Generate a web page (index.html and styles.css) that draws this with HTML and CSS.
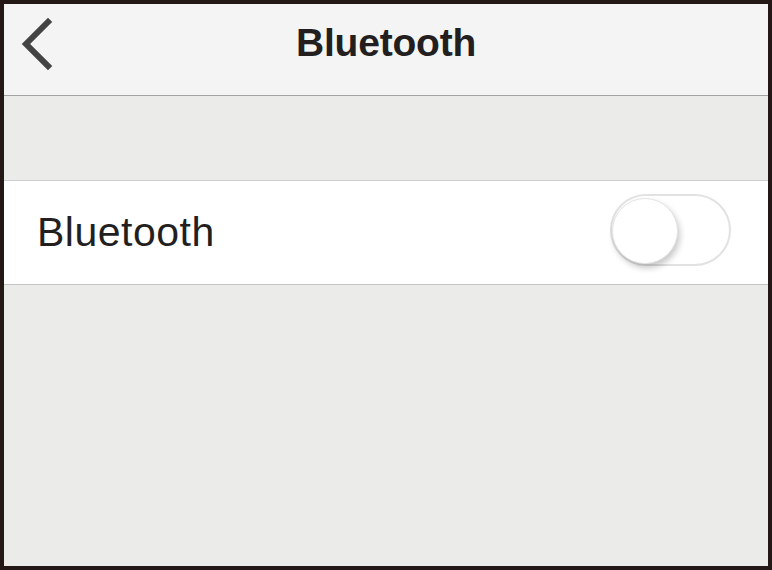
FILE: index.html
```html
<!DOCTYPE html>
<html lang="en">
<head>
    <meta charset="UTF-8">
    <meta name="viewport" content="width=device-width, initial-scale=1.0">
    <title>Bluetooth</title>
    <link rel="stylesheet" href="styles.css">
</head>
<body>

    <div class="frame">
        <!-- top bar -->
        <div class="navbar">
            <div class="back">
                <svg width="40" height="56" viewBox="0 0 40 56">
                    <polyline points="28,6 6,28 28,50" fill="none" stroke="#434343" stroke-width="6" stroke-linecap="square" stroke-linejoin="miter"/>
                </svg>
            </div>
            <div class="title">Bluetooth</div>
            <div></div>
        </div>

        <div class="spacer"></div>

        <!-- setting row -->
        <div class="row">
            <div class="label">Bluetooth</div>
            <div class="switch">
                <div class="knob"></div>
            </div>
        </div>
    </div>

</body>
</html>
```

FILE: styles.css
```css
body{
    margin:0;
    font-family: "Liberation Sans", Arial, sans-serif;
}
.frame{
    width:772px;
    height:570px;
    box-sizing: border-box;
    border:4px solid #231816;
    background-color: #ebebea;
}
.navbar{
    height:91px;
    background-color: #f4f4f4;
    border-bottom:1px solid #a3a3a3;
    display:grid;
    grid-template-columns: 1fr auto 1fr;
    align-items: start;
}
.back{
    padding-top:12px;
    padding-left:16px;
}
.back svg{
    display:block;
}
.title{
    margin-top:19px;
    font-size:39px;
    line-height:39px;
    font-weight:bold;
    color:#231f1f;
    letter-spacing:-0.2px;
}
.spacer{
    height:84px;
}
.row{
    height:103px;
    background-color: white;
    border-top:1px solid #cfcfcf;
    border-bottom:1px solid #c4c4c4;
    display:flex;
    align-items: center;
    justify-content: space-between;
    padding-left:33px;
    padding-right:37px;
}
.label{
    font-size:41px;
    color:#231f1f;
    letter-spacing:0.5px;
}
.switch{
    width:117px;
    height:68px;
    border:2px solid #e2e2e2;
    border-radius:36px;
    background-color: white;
    position: relative;
    margin-bottom:6px;
}
.knob{
    position:absolute;
    left:0;
    top:2px;
    width:66px;
    height:66px;
    border-radius:50%;
    background-color: white;
    border:1px solid #e4e4e4;
    box-sizing: border-box;
    box-shadow: 2px 4px 6px rgba(0,0,0,0.22);
}
```
